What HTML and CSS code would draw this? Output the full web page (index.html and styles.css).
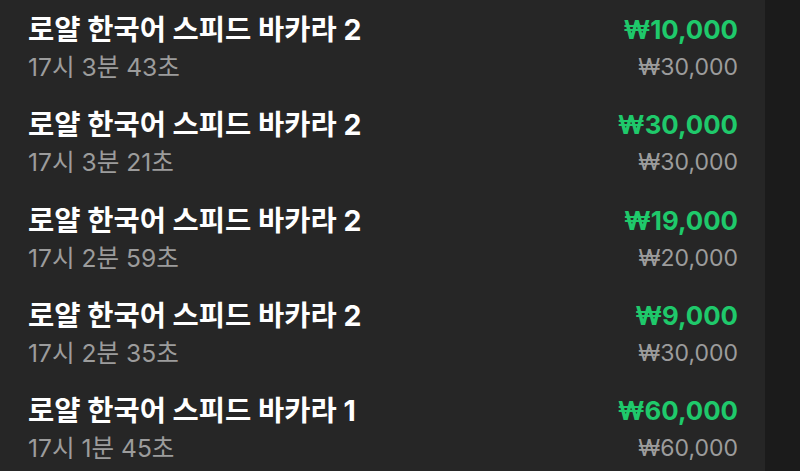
FILE: index.html
```html
<!DOCTYPE html>
<html lang="ko">
<head>
<meta charset="utf-8">
<link rel="stylesheet" href="styles.css">
</head>
<body>
<div class="panel">
  <ul class="list">
    <li class="row">
      <div class="info"><div class="title">로얄 한국어 스피드 바카라 2</div><div class="time">17시 3분 43초</div></div>
      <div class="amounts"><div class="win">₩10,000</div><div class="bet">₩30,000</div></div>
    </li>
    <li class="row">
      <div class="info"><div class="title">로얄 한국어 스피드 바카라 2</div><div class="time">17시 3분 21초</div></div>
      <div class="amounts"><div class="win">₩30,000</div><div class="bet">₩30,000</div></div>
    </li>
    <li class="row">
      <div class="info"><div class="title">로얄 한국어 스피드 바카라 2</div><div class="time">17시 2분 59초</div></div>
      <div class="amounts"><div class="win">₩19,000</div><div class="bet">₩20,000</div></div>
    </li>
    <li class="row">
      <div class="info"><div class="title">로얄 한국어 스피드 바카라 2</div><div class="time">17시 2분 35초</div></div>
      <div class="amounts"><div class="win">₩9,000</div><div class="bet">₩30,000</div></div>
    </li>
    <li class="row">
      <div class="info"><div class="title">로얄 한국어 스피드 바카라 1</div><div class="time">17시 1분 45초</div></div>
      <div class="amounts"><div class="win">₩60,000</div><div class="bet">₩60,000</div></div>
    </li>
  </ul>
</div>
</body>
</html>
```
FILE: styles.css
```css
html, body {
  margin: 0;
  padding: 0;
  background: #1b1b1b;
  height: 100%;
  overflow: hidden;
}
body {
  font-family: Inter, "Noto Sans CJK KR", sans-serif;
}
.panel {
  width: 765px;
  height: 100%;
  background: #262626;
}
.list {
  list-style: none;
  margin: 0;
  padding: 13px 27px 0 28px;
}
.row {
  display: flex;
  justify-content: space-between;
  align-items: flex-start;
  height: 95.25px;
}
.title {
  color: #ffffff;
  font-size: 28.5px;
  font-weight: 700;
  line-height: 34px;
  height: 34px;
}
.time {
  color: #9c9c9c;
  font-size: 24.6px;
  line-height: 30px;
  height: 30px;
  margin-top: 5px;
}
.amounts {
  text-align: right;
}
.win {
  color: #1fc96b;
  font-size: 25.8px;
  font-weight: 700;
  line-height: 34px;
  height: 34px;
}
.bet {
  color: #9c9c9c;
  font-size: 23px;
  line-height: 30px;
  height: 30px;
  margin-top: 5px;
}
```
